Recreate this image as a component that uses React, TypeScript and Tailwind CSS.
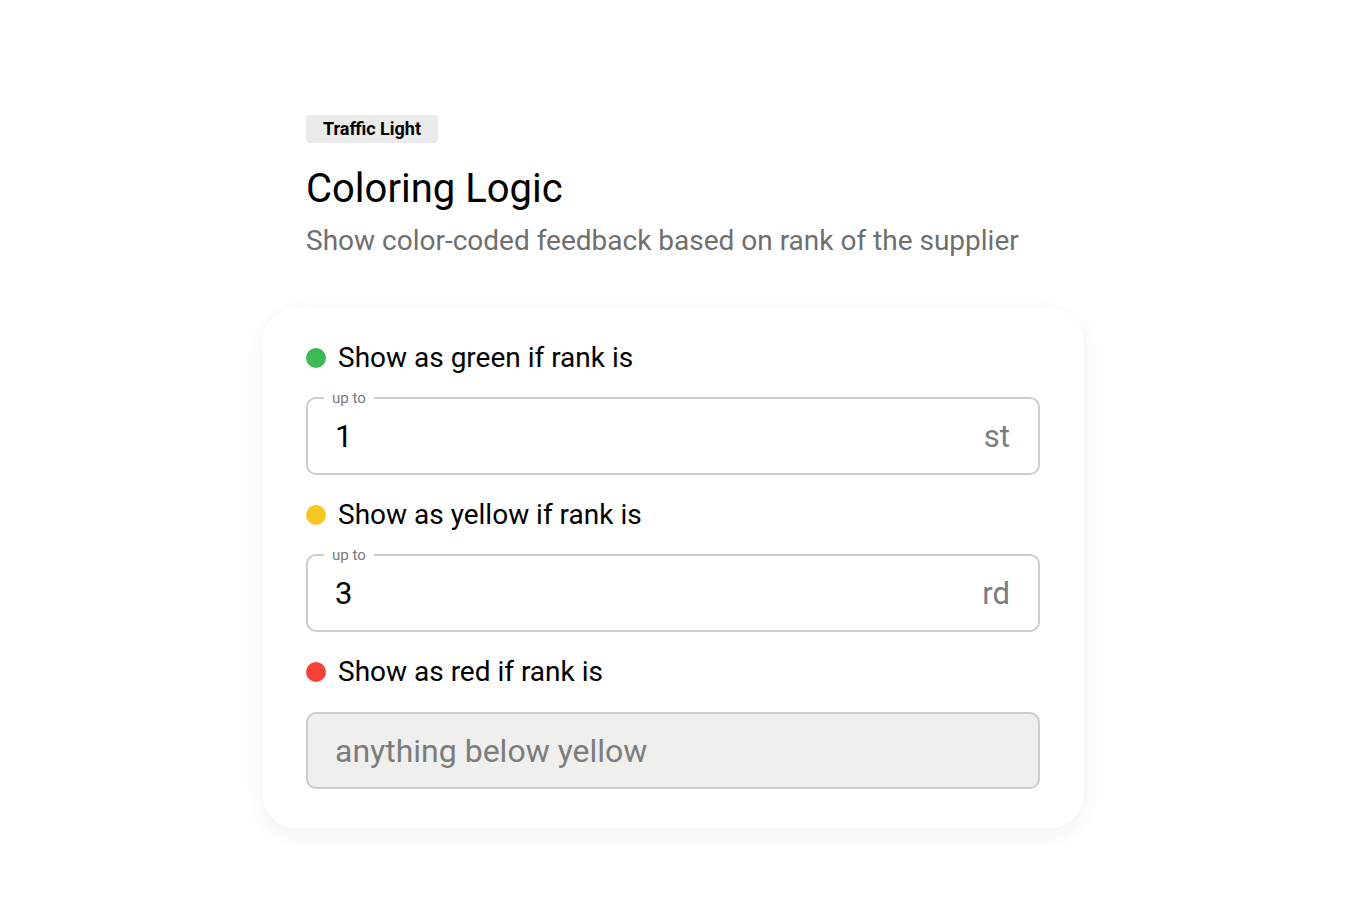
import React from 'react'

type Rule = {
  color: string
  label: string
  value?: string
  suffix?: string
  placeholder?: string
}

const rules: Rule[] = [
  { color: 'bg-[#3cba54]', label: 'Show as green if rank is', value: '1', suffix: 'st' },
  { color: 'bg-[#f8c623]', label: 'Show as yellow if rank is', value: '3', suffix: 'rd' },
  { color: 'bg-[#f44336]', label: 'Show as red if rank is', placeholder: 'anything below yellow' },
]

function RankField({ rule }: { rule: Rule }) {
  if (rule.placeholder) {
    return (
      <div className="h-[77px] rounded-[10px] border-2 border-[#cbcccb] bg-[#eff0ee] flex items-center px-[27px]">
        <span className="text-[32px] text-[#7c7c7c]">{rule.placeholder}</span>
      </div>
    )
  }
  return (
    <fieldset className="relative h-[86px] -mt-[9px] rounded-[10px] border-2 border-[#cbcccb] px-[16px] flex items-center">
      <legend className="px-[8px] text-[15px] leading-[18px] text-[#7a7a7a]">up to</legend>
      <div className="flex-1 flex items-center justify-between pl-[11px] pr-[12px] -mt-[6px]">
        <span className="text-[31px] text-black">{rule.value}</span>
        <span className="text-[31px] text-[#7c7c7c]">{rule.suffix}</span>
      </div>
    </fieldset>
  )
}

export default function App() {
  return (
    <div className="min-h-screen bg-white font-['Roboto',sans-serif] pt-[115px] pl-[262px]">
      <div className="pl-[44px]">
        <span className="inline-block bg-[#ebebeb] rounded-[3px] px-[17px] h-[28px] leading-[28px] text-[18px] font-bold text-black">
          Traffic Light
        </span>
        <h1 className="mt-[22px] text-[40px] leading-[48px] text-black">Coloring Logic</h1>
        <p className="mt-[11px] text-[28px] leading-[34px] text-[#6f6f6f]">
          Show color-coded feedback based on rank of the supplier
        </p>
      </div>
      <div className="mt-[50px] w-[822px] rounded-[36px] bg-white shadow-[0_6px_24px_rgba(0,0,0,0.06)] px-[44px] pt-[33px] pb-[40px] flex flex-col">
        {rules.map((rule, i) => (
          <div key={i} className={i > 0 ? 'mt-[23px]' : ''}>
            <div className="flex items-center gap-[12px] h-[34px]">
              <span className={`w-[20px] h-[20px] rounded-full ${rule.color}`} />
              <span className="text-[28px] leading-[34px] text-black">{rule.label}</span>
            </div>
            <div className="mt-[23px]">
              <RankField rule={rule} />
            </div>
          </div>
        ))}
      </div>
    </div>
  )
}
